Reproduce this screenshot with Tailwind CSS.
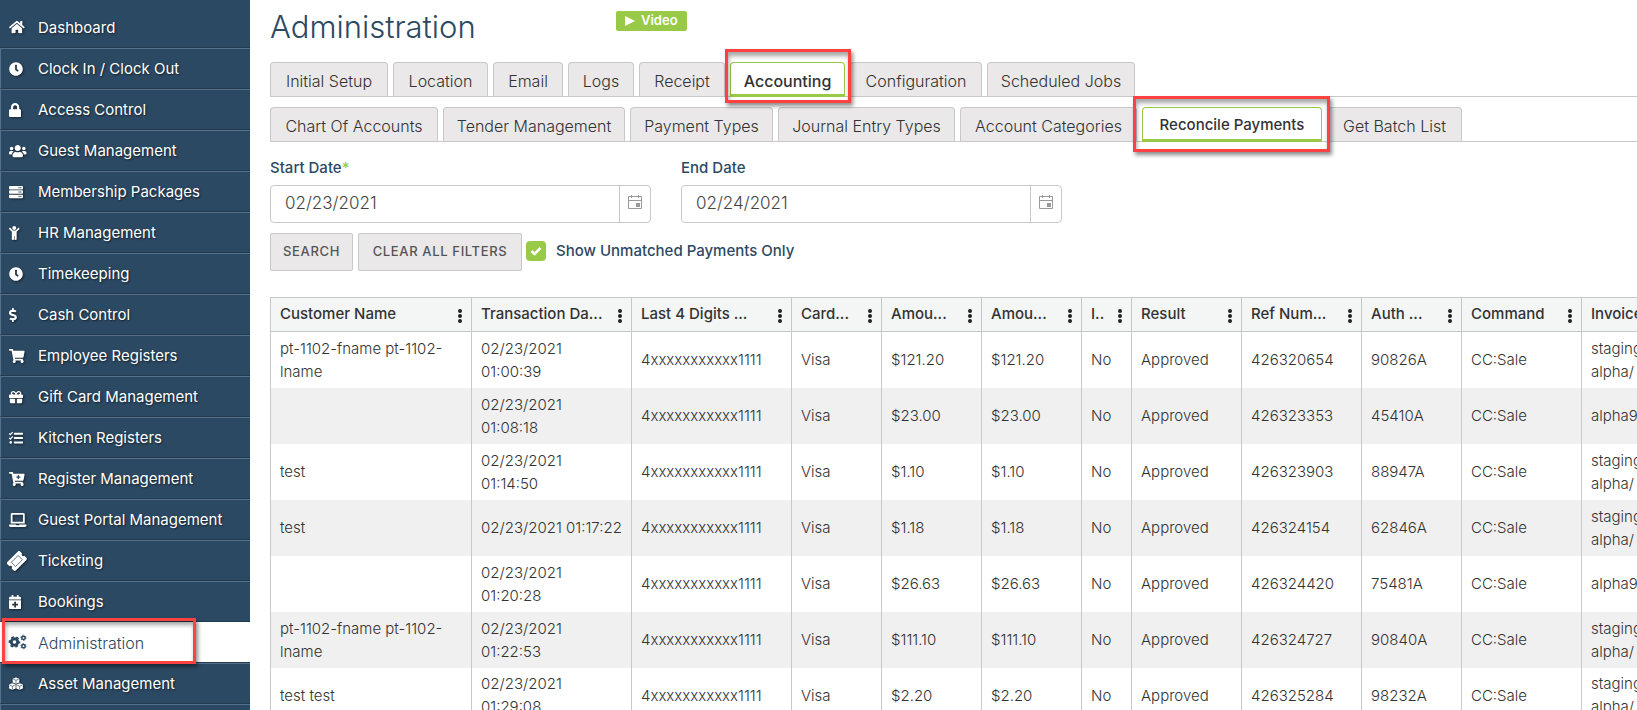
<!DOCTYPE html>
<html lang="en">
<head>
    <meta charset="UTF-8">
    <meta name="viewport" content="width=device-width, initial-scale=1.0">
    <title>Administration - Reconcile Payments</title>
    <script src="https://cdn.jsdelivr.net/npm/@tailwindcss/browser@4"></script>
</head>
<body class="flex h-screen overflow-hidden bg-white font-[Inter,sans-serif] text-[#333]">

    <!-- Icon shapes used more than once -->
    <svg class="hidden">
        <symbol id="clock" viewBox="0 0 512 512"><path d="M256,8C119,8,8,119,8,256S119,504,256,504,504,393,504,256,393,8,256,8Zm92.49,313h0l-20,25a16,16,0,0,1-22.49,2.5h0l-67-49.72a40,40,0,0,1-15-31.23V112a16,16,0,0,1,16-16h32a16,16,0,0,1,16,16V256l58,42.5A16,16,0,0,1,348.49,321Z"/></symbol>
        <symbol id="cart" viewBox="0 0 576 512"><path d="M528.12 301.319l47.273-208C578.806 78.301 567.391 64 551.99 64H159.208l-9.166-44.81C147.758 8.021 137.93 0 126.529 0H24C10.745 0 0 10.745 0 24v16c0 13.255 10.745 24 24 24h69.883l70.248 343.435C147.325 417.1 136 435.222 136 456c0 30.928 25.072 56 56 56s56-25.072 56-56c0-15.674-6.447-29.835-16.824-40h209.647C430.447 426.165 424 440.326 424 456c0 30.928 25.072 56 56 56s56-25.072 56-56c0-22.172-12.888-41.332-31.579-50.405l5.517-24.276c3.413-15.018-8.002-29.319-23.403-29.319H218.117l-6.545-32h293.145c11.206 0 20.92-7.754 23.403-18.681z"/></symbol>
        <symbol id="calendar" viewBox="0 0 16 16"><path fill="none" stroke="currentColor" d="M1.500 2.500h13v12h-13zM1.500 6.500h13M4.500 1v3M11.500 1v3"/><path d="M9 9h4v4H9z"/></symbol>
        <symbol id="dots" viewBox="0 0 4 14"><circle cx="2" cy="2" r="2"/><circle cx="2" cy="7" r="2"/><circle cx="2" cy="12" r="2"/></symbol>
    </svg>

    <!-- Sidebar -->
    <aside class="w-[250px] shrink-0 bg-[#2c4963] pt-[7px]">
        <nav class="text-[15px] text-white [text-shadow:1px_1px_2px_rgba(0,0,0,0.6)] [&_a]:pt-0.5 [&_svg]:h-3.5 [&_svg]:fill-current [&_svg]:drop-shadow-[1px_1px_1px_rgba(0,0,0,0.5)] [&_span]:w-[29px] [&_span]:pb-0.5">
            <a href="#" class="flex h-[41px] items-center border-b border-b-[#223a50] pl-[9px]">
                <span><svg viewBox="0 0 576 512"><path d="M280.37 148.26L96 300.11V464a16 16 0 0 0 16 16l112.06-.29a16 16 0 0 0 15.92-16V368a16 16 0 0 1 16-16h64a16 16 0 0 1 16 16v95.64a16 16 0 0 0 16 16.05L464 480a16 16 0 0 0 16-16V300L295.67 148.26a12.19 12.19 0 0 0-15.3 0zM571.6 251.47L488 182.56V44.05a12 12 0 0 0-12-12h-56a12 12 0 0 0-12 12v72.61L318.47 43a48 48 0 0 0-61 0L4.34 251.47a12 12 0 0 0-1.6 16.9l25.5 31A12 12 0 0 0 45.15 301l235.22-193.74a12.19 12.19 0 0 1 15.3 0L530.9 301a12 12 0 0 0 16.9-1.6l25.5-31a12 12 0 0 0-1.7-16.93z"/></svg></span>Dashboard
            </a>
            <a href="#" class="flex h-[41px] items-center border-y border-l border-y-[#223a50] border-t-[#56708a] border-l-[#56708a] pl-2">
                <span><svg viewBox="0 0 512 512"><use href="#clock"/></svg></span>Clock In / Clock Out
            </a>
            <a href="#" class="flex h-[41px] items-center border-y border-l border-y-[#223a50] border-t-[#56708a] border-l-[#56708a] pl-2">
                <span><svg viewBox="0 0 448 512"><path d="M400 224h-24v-72C376 68.200 307.800 0 224 0S72 68.200 72 152v72H48c-26.500 0-48 21.500-48 48v192c0 26.500 21.500 48 48 48h352c26.500 0 48-21.500 48-48V272c0-26.500-21.500-48-48-48zm-104 0H152v-72c0-39.700 32.300-72 72-72s72 32.300 72 72v72z"/></svg></span>Access Control
            </a>
            <a href="#" class="flex h-[41px] items-center border-y border-l border-y-[#223a50] border-t-[#56708a] border-l-[#56708a] pl-2">
                <span><svg viewBox="0 0 640 512"><path d="M96 224c35.300 0 64-28.700 64-64s-28.700-64-64-64-64 28.700-64 64 28.700 64 64 64zm448 0c35.300 0 64-28.700 64-64s-28.700-64-64-64-64 28.700-64 64 28.700 64 64 64zm32 32h-64c-17.600 0-33.500 7.100-45.100 18.600 40.300 22.100 68.900 62 75.100 109.400h66c17.700 0 32-14.300 32-32v-32c0-35.300-28.700-64-64-64zm-256 0c61.900 0 112-50.100 112-112S381.900 32 320 32 208 82.100 208 144s50.100 112 112 112zm76.800 32h-8.300c-20.800 10-43.900 16-68.500 16s-47.600-6-68.500-16h-8.300C179.600 288 128 339.600 128 403.200V432c0 26.500 21.500 48 48 48h288c26.500 0 48-21.500 48-48v-28.800c0-63.600-51.600-115.200-115.200-115.200zm-223.700-13.400C161.500 263.100 145.600 256 128 256H64c-35.300 0-64 28.700-64 64v32c0 17.700 14.300 32 32 32h65.900c6.300-47.400 34.900-87.300 75.200-109.400z"/></svg></span>Guest Management
            </a>
            <a href="#" class="flex h-[41px] items-center border-y border-l border-y-[#223a50] border-t-[#56708a] border-l-[#56708a] pl-2">
                <span><svg viewBox="0 0 512 512"><rect y="32" width="512" height="128" rx="28"/><rect y="192" width="512" height="128" rx="28"/><rect y="352" width="512" height="128" rx="28"/><g fill="#2c4963"><circle cx="432" cy="96" r="24"/><circle cx="368" cy="96" r="24"/><circle cx="432" cy="256" r="24"/><circle cx="368" cy="256" r="24"/><circle cx="432" cy="416" r="24"/><circle cx="368" cy="416" r="24"/></g></svg></span>Membership Packages
            </a>
            <a href="#" class="flex h-[41px] items-center border-y border-l border-y-[#223a50] border-t-[#56708a] border-l-[#56708a] pl-2">
                <span><svg viewBox="0 0 384 512"><path d="M120 72c0-39.765 32.235-72 72-72s72 32.235 72 72c0 39.764-32.235 72-72 72s-72-32.236-72-72zm254.627 1.373c-12.496-12.497-32.758-12.497-45.254 0L242.745 160H141.254L54.627 73.373c-12.496-12.497-32.758-12.497-45.254 0-12.497 12.497-12.497 32.758 0 45.255L104 213.254V480c0 17.673 14.327 32 32 32h16c17.673 0 32-14.327 32-32V368h16v112c0 17.673 14.327 32 32 32h16c17.673 0 32-14.327 32-32V213.254l94.627-94.627c12.497-12.496 12.497-32.757 0-45.254z"/></svg></span>HR Management
            </a>
            <a href="#" class="flex h-[41px] items-center border-y border-l border-y-[#223a50] border-t-[#56708a] border-l-[#56708a] pl-2">
                <span><svg viewBox="0 0 512 512"><use href="#clock"/></svg></span>Timekeeping
            </a>
            <a href="#" class="flex h-[41px] items-center border-y border-l border-y-[#223a50] border-t-[#56708a] border-l-[#56708a] pl-2">
                <span><svg viewBox="0 0 288 512"><path d="M209.200 233.400l-108-31.600C88.700 198.200 80 186.500 80 173.500c0-16.300 13.200-29.500 29.500-29.500h66.300c12.200 0 24.200 3.700 34.200 10.500 6.100 4.100 14.300 3.100 19.500-2l34.800-34c7.100-6.900 6.100-18.400-1.800-24.500C238 74.800 207.400 64.100 176 64V16c0-8.800-7.200-16-16-16h-32c-8.800 0-16 7.200-16 16v48h-2.500C45.800 64-5.400 118.700.500 183.600c4.200 46.100 39.400 83.600 83.800 96.600l102.500 30c12.500 3.700 21.200 15.300 21.200 28.300 0 16.300-13.200 29.500-29.500 29.500h-66.300C100 368 88 364.300 78 357.500c-6.100-4.100-14.300-3.100-19.500 2l-34.800 34c-7.100 6.900-6.100 18.400 1.800 24.500 24.500 19.200 55.100 29.900 86.500 30v48c0 8.800 7.200 16 16 16h32c8.800 0 16-7.200 16-16v-48.200c46.600-.9 90.300-28.600 105.700-72.700 21.500-61.600-14.600-124.800-72.500-141.700z"/></svg></span>Cash Control
            </a>
            <a href="#" class="flex h-[41px] items-center border-y border-l border-y-[#223a50] border-t-[#56708a] border-l-[#56708a] pl-2">
                <span><svg viewBox="0 0 576 512"><use href="#cart"/></svg></span>Employee Registers
            </a>
            <a href="#" class="flex h-[41px] items-center border-y border-l border-y-[#223a50] border-t-[#56708a] border-l-[#56708a] pl-2">
                <span><svg viewBox="0 0 512 512"><path d="M32 448c0 17.700 14.300 32 32 32h160V320H32v128zm256 32h160c17.700 0 32-14.300 32-32V320H288v160zm192-320h-42.100c6.200-12.100 10.100-25.500 10.100-40 0-48.500-39.500-88-88-88-41.600 0-68.500 21.300-103 68.300-34.500-47-61.400-68.300-103-68.300-48.500 0-88 39.500-88 88 0 14.500 3.800 27.900 10.100 40H32c-17.700 0-32 14.300-32 32v80c0 8.800 7.200 16 16 16h480c8.800 0 16-7.200 16-16v-80c0-17.700-14.300-32-32-32zm-326.100 0c-22.100 0-40-17.900-40-40s17.900-40 40-40c19.900 0 34.600 3.300 86.100 80h-86.100zm206.100 0h-86.100c51.400-76.500 65.700-80 86.100-80 22.100 0 40 17.900 40 40s-17.900 40-40 40z"/></svg></span>Gift Card Management
            </a>
            <a href="#" class="flex h-[41px] items-center border-y border-l border-y-[#223a50] border-t-[#56708a] border-l-[#56708a] pl-2">
                <span><svg viewBox="0 0 512 512"><g fill="none" stroke="currentColor" stroke-width="44"><path d="M8 92l42 42 86-94M8 252l42 42 86-94"/></g><circle cx="64" cy="416" r="46"/><rect x="180" y="60" width="332" height="74" rx="16"/><rect x="180" y="220" width="332" height="74" rx="16"/><rect x="180" y="380" width="332" height="74" rx="16"/></svg></span>Kitchen Registers
            </a>
            <a href="#" class="flex h-[41px] items-center border-y border-l border-y-[#223a50] border-t-[#56708a] border-l-[#56708a] pl-2">
                <span><svg viewBox="0 0 576 512"><use href="#cart"/><path fill="#2c4963" d="M320 112h44v52h52v44h-52v52h-44v-52h-52v-44h52z"/></svg></span>Register Management
            </a>
            <a href="#" class="flex h-[41px] items-center border-y border-l border-y-[#223a50] border-t-[#56708a] border-l-[#56708a] pl-2">
                <span><svg viewBox="0 0 640 512"><path d="M624 416H381.540c-.74 19.810-14.710 32-32.740 32H288c-18.690 0-33.020-17.470-32.770-32H16c-8.800 0-16 7.200-16 16v16c0 35.200 28.800 64 64 64h512c35.200 0 64-28.800 64-64v-16c0-8.800-7.200-16-16-16zM576 48c0-26.400-21.600-48-48-48H112C85.600 0 64 21.600 64 48v336h512V48zm-64 272H128V64h384v256z"/></svg></span>Guest Portal Management
            </a>
            <a href="#" class="flex h-[41px] items-center border-y border-l border-y-[#223a50] border-t-[#56708a] border-l-[#56708a] pl-2">
                <span><svg viewBox="0 0 576 512" class="overflow-visible"><g transform="rotate(-45 288 256)"><path transform="translate(-40 -36) scale(1.140)" d="M528 256c0 26.510 21.490 48 48 48v96c0 26.510-21.490 48-48 48H48c-26.510 0-48-21.490-48-48v-96c26.510 0 48-21.490 48-48s-21.490-48-48-48v-96c0-26.510 21.490-48 48-48h480c26.510 0 48 21.490 48 48v96c-26.510 0-48 21.490-48 48z"/><path fill="none" stroke="#2c4963" stroke-width="26" d="M112 146h352v220H112z"/></g></svg></span>Ticketing
            </a>
            <a href="#" class="flex h-[41px] items-center border-y border-l border-y-[#223a50] border-t-[#56708a] border-l-[#56708a] pl-2">
                <span><svg viewBox="0 0 448 512"><path d="M436 160H12c-6.600 0-12-5.400-12-12v-36c0-26.500 21.500-48 48-48h48V12c0-6.600 5.400-12 12-12h40c6.600 0 12 5.400 12 12v52h128V12c0-6.600 5.400-12 12-12h40c6.600 0 12 5.400 12 12v52h48c26.500 0 48 21.500 48 48v36c0 6.600-5.400 12-12 12zM12 192h424c6.600 0 12 5.400 12 12v260c0 26.500-21.500 48-48 48H48c-26.500 0-48-21.500-48-48V204c0-6.600 5.400-12 12-12zm316 140c0-6.600-5.400-12-12-12h-60v-60c0-6.600-5.400-12-12-12h-40c-6.600 0-12 5.400-12 12v60h-60c-6.600 0-12 5.400-12 12v40c0 6.600 5.400 12 12 12h60v60c0 6.600 5.400 12 12 12h40c6.600 0 12-5.400 12-12v-60h60c6.600 0 12-5.400 12-12v-40z"/></svg></span>Bookings
            </a>
            <a href="#" class="relative flex h-[41px] items-center border-b border-b-[#223a50] bg-white pl-[9px] text-base font-light text-[#2c4963] text-shadow-none [&_svg]:drop-shadow-none">
                <span><svg viewBox="0 0 640 512" class="overflow-visible"><g fill="none" stroke="currentColor"><circle cx="200" cy="256" r="118" stroke-width="104"/><circle cx="200" cy="256" r="184" stroke-width="56" stroke-dasharray="104 88.680" stroke-dashoffset="52"/><circle cx="528" cy="104" r="62" stroke-width="56"/><circle cx="528" cy="104" r="96" stroke-width="30" stroke-dasharray="54 46.530"/><circle cx="528" cy="408" r="62" stroke-width="56"/><circle cx="528" cy="408" r="96" stroke-width="30" stroke-dasharray="54 46.530"/></g></svg></span>Administration
                <i class="absolute -top-1 left-0.5 h-[46px] w-[194px] border-3 border-[#ff4141] shadow-[2px_3px_4px_rgba(0,0,0,0.45),inset_1px_4px_4px_rgba(0,0,0,0.35)]"></i>
            </a>
            <a href="#" class="flex h-[41px] items-center border-y border-l border-y-[#223a50] border-t-[#56708a] border-l-[#56708a] pl-2">
                <span><svg viewBox="0 0 512 512"><path d="M256 16l120 46v138l-120 50-120-50V62zM124 232l120 46v138l-120 50L4 416V278zM388 232l120 46v138l-120 50-120-50V278z"/><path fill="none" stroke="#2c4963" stroke-width="24" d="M156 80l100 42 100-42M256 122v110M24 296l100 42 100-42M124 338v110M288 296l100 42 100-42M388 338v110"/></svg></span>Asset Management
            </a>
            <a href="#" aria-label="More" class="flex h-[41px] border-t border-l border-[#56708a]"></a>
        </nav>
    </aside>

    <main class="min-w-0 flex-1 overflow-hidden pl-5">
        <header class="flex h-[62px] items-start">
            <h1 class="w-[346px] pt-[7px] text-[31px] leading-10 font-light text-[#2c4963]">Administration</h1>
            <button class="mt-[11px] flex h-5 items-center gap-1.5 rounded-xs bg-[#98ca48] px-[9px] text-[13px] font-semibold text-white">
                <svg class="h-2.5 w-2.5 fill-current" viewBox="0 0 10 10"><path d="M0 0l10 5-10 5z"/></svg>Video
            </button>
        </header>

        <!-- Main tabs -->
        <nav class="flex gap-[5px] border-b border-[#c8c8c8] font-light [&_button]:h-[34px] [&_button]:rounded-t-sm [&_button]:border [&_button]:border-b-0 [&_button]:border-[#c8c8c8] [&_button]:bg-[#eae8e8] [&_button]:pt-0.5">
            <button class="w-[118px]">Initial Setup</button>
            <button class="w-[95px]">Location</button>
            <button class="w-[70px]">Email</button>
            <button class="w-[66px]">Logs</button>
            <button class="w-[86px]">Receipt</button>
            <div class="relative">
                <button class="-mb-px h-[35px]! w-[115px] border-b-3! border-[#98ca48]! bg-white! pt-1! font-medium">Accounting</button>
                <i class="absolute -top-[13px] -left-[5px] z-10 h-[54px] w-[126px] border-3 border-[#ff4141] shadow-[2px_3px_4px_rgba(0,0,0,0.45),inset_1px_4px_4px_rgba(0,0,0,0.35)]"></i>
            </div>
            <button class="w-[132px]">Configuration</button>
            <button class="w-[148px]">Scheduled Jobs</button>
        </nav>

        <!-- Accounting tabs -->
        <nav class="mt-[10px] flex gap-[5px] border-b border-[#c8c8c8] font-light [&_button]:h-[34px] [&_button]:rounded-t-sm [&_button]:border [&_button]:border-b-0 [&_button]:border-[#c8c8c8] [&_button]:bg-[#eae8e8] [&_button]:pt-0.5">
            <button class="w-[168px]">Chart Of Accounts</button>
            <button class="w-[182px]">Tender Management</button>
            <button class="w-[143px]">Payment Types</button>
            <button class="w-[177px]">Journal Entry Types</button>
            <button class="w-[177px]">Account Categories</button>
            <div class="relative">
                <button class="-mb-px h-[35px]! w-[180px] border-b-3! border-[#98ca48]! bg-white! pt-1! text-[15px] font-medium">Reconcile Payments</button>
                <i class="absolute -top-[11px] -left-[9px] z-10 h-[56px] w-[197px] border-3 border-[#ff4141] shadow-[2px_3px_4px_rgba(0,0,0,0.45),inset_1px_4px_4px_rgba(0,0,0,0.35)]"></i>
            </div>
            <button class="w-[135px]">Get Batch List</button>
        </nav>

        <!-- Filters -->
        <form class="pt-4" onsubmit="return false">
            <div class="flex gap-[30px] text-[#2c4963]">
                <div class="w-[381px]">
                    <label for="start" class="block h-[27px] text-[15px] leading-5 font-medium">Start Date<span class="text-[#98ca48]">*</span></label>
                    <div class="flex h-[38px] rounded-sm border border-[#c8c8c8]">
                        <input id="start" type="text" value="02/23/2021" class="min-w-0 flex-1 px-[14px] text-[17px] font-light text-[#444] outline-none">
                        <button aria-label="Pick start date" class="flex w-[31px] items-center justify-center border-l border-[#c8c8c8] pb-1 text-[#999]"><svg class="h-4 w-4 fill-current"><use href="#calendar"/></svg></button>
                    </div>
                </div>
                <div class="w-[381px]">
                    <label for="end" class="block h-[27px] text-[15px] leading-5 font-medium">End Date</label>
                    <div class="flex h-[38px] rounded-sm border border-[#c8c8c8]">
                        <input id="end" type="text" value="02/24/2021" class="min-w-0 flex-1 px-[14px] text-[17px] font-light text-[#444] outline-none">
                        <button aria-label="Pick end date" class="flex w-[31px] items-center justify-center border-l border-[#c8c8c8] pb-1 text-[#999]"><svg class="h-4 w-4 fill-current"><use href="#calendar"/></svg></button>
                    </div>
                </div>
            </div>
            <div class="mt-[10px] flex items-center text-[#555]">
                <button class="h-[38px] w-[83px] rounded-xs border border-[#c8c8c8] bg-[#eae8e8] text-[13px] font-medium tracking-wider">SEARCH</button>
                <button class="ml-[5px] h-[38px] w-[164px] rounded-xs border border-[#c8c8c8] bg-[#eae8e8] text-[13px] font-medium tracking-wider">CLEAR ALL FILTERS</button>
                <label class="ml-1 flex items-center gap-2.5 pb-0.5 text-[15px] font-medium text-[#2c4963]">
                    <span class="grid">
                        <input type="checkbox" checked class="col-start-1 row-start-1 h-5 w-5 appearance-none rounded-sm bg-[#98ca48]">
                        <svg class="pointer-events-none col-start-1 row-start-1 h-5 w-5" viewBox="0 0 20 20"><path fill="none" stroke="#fff" stroke-width="2.500" d="M5.500 10l3 3 6-6"/></svg>
                    </span>
                    Show Unmatched Payments Only
                </label>
            </div>
        </form>

        <!-- Payments grid -->
        <table class="mt-[26px] w-[1462px] table-fixed border-collapse border border-[#c8c8c8] text-[15px]">
            <thead>
                <tr id="head" class="h-[34px] bg-[#f4f6f6]"></tr>
            </thead>
            <tbody id="rows"></tbody>
        </table>
    </main>

    <script>
        const columns = [
            ['Customer Name', 201], ['Transaction Da...', 160], ['Last 4 Digits ...', 160], ['Card...', 90],
            ['Amou...', 100], ['Amou...', 100], ['I..', 50], ['Result', 110], ['Ref Num...', 120],
            ['Auth ...', 100], ['Command', 120], ['Invoice', 151]
        ];

        // customer, date, amount, ref number, auth code, invoice
        const payments = [
            ['pt-1102-fname pt-1102-<br>lname', '02/23/2021<br>01:00:39', '$121.20', '426320654', '90826A', 'staging<br>alpha/'],
            ['', '02/23/2021<br>01:08:18', '$23.00', '426323353', '45410A', 'alpha9'],
            ['test', '02/23/2021<br>01:14:50', '$1.10', '426323903', '88947A', 'staging<br>alpha/'],
            ['test', '02/23/2021 01:17:22', '$1.18', '426324154', '62846A', 'staging<br>alpha/'],
            ['', '02/23/2021<br>01:20:28', '$26.63', '426324420', '75481A', 'alpha9'],
            ['pt-1102-fname pt-1102-<br>lname', '02/23/2021<br>01:22:53', '$111.10', '426324727', '90840A', 'staging<br>alpha/'],
            ['test test', '02/23/2021<br>01:29:08', '$2.20', '426325284', '98232A', 'staging<br>alpha/']
        ];

        document.getElementById('head').innerHTML = columns.map(([name, width]) => `
            <th style="width:${width}px" class="border border-[#c8c8c8] pr-[9px] pl-[9px] text-left font-medium">
                <div class="flex items-center justify-between whitespace-nowrap">${name}<button aria-label="Column menu" class="pt-0.5"><svg class="h-3.5 w-1 fill-[#222]"><use href="#dots"/></svg></button></div>
            </th>`).join('');

        document.getElementById('rows').innerHTML = payments.map(([customer, date, amount, ref, auth, invoice]) => {
            const cells = [customer, date, '4xxxxxxxxxxx1111', 'Visa', amount, amount, 'No', 'Approved', ref, auth, 'CC:Sale', invoice];
            return `<tr class="h-14 even:bg-[#f0f0f0]">${cells.map(cell => `<td class="border-x border-[#c8c8c8] px-[9px] leading-[23px] font-light whitespace-nowrap">${cell}</td>`).join('')}</tr>`;
        }).join('');
    </script>
</body>
</html>
